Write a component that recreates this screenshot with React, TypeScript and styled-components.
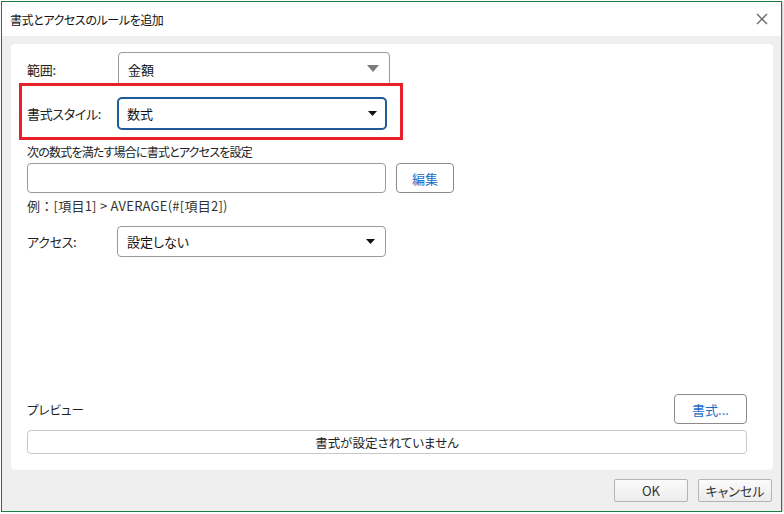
import React from "react";
import styled, { createGlobalStyle } from "styled-components";

const GlobalStyle = createGlobalStyle`
  html, body { margin: 0; padding: 0; background: #ffffff; }
  body {
    font-family: "Noto Sans CJK JP", "Noto Sans", sans-serif;
    font-feature-settings: "palt" 1;
    color: #222;
  }
  * { box-sizing: border-box; }
`;

const Dialog = styled.div`
  margin: 1px 0 0 1px;
  width: 781px;
  height: 511px;
  border: 1px solid #1d7a47;
  box-shadow: 1px 1px 2px rgba(0, 0, 0, 0.25);
  display: flex;
  flex-direction: column;
  background: #efefef;
`;

const TitleBar = styled.div`
  height: 34px;
  background: #fff;
  display: flex;
  align-items: center;
  justify-content: space-between;
  padding: 0 12px 0 8px;
  font-size: 12px;
  letter-spacing: -0.4px;
  color: #111;
`;

const CloseButton = styled.button`
  border: none;
  background: none;
  padding: 0;
  width: 14px;
  height: 14px;
  display: flex;
  align-items: center;
  justify-content: center;
  cursor: pointer;
`;

const Body = styled.div`
  flex: 1;
  display: flex;
  flex-direction: column;
  padding: 8px 8px 9px 9px;
`;

const Panel = styled.div`
  position: relative;
  flex: 1;
  background: #fff;
  border-radius: 4px;
  padding: 8px 26px 16px 16px;
  display: flex;
  flex-direction: column;
`;

const Row = styled.div<{ $mt?: number }>`
  display: flex;
  align-items: center;
  margin-top: ${(p) => p.$mt ?? 0}px;
`;

const Label = styled.div<{ $w: number }>`
  width: ${(p) => p.$w}px;
  font-size: 13px;
  letter-spacing: -0.3px;
  color: #222;
`;

const Select = styled.div<{ $w: number; $h: number; $focused?: boolean }>`
  width: ${(p) => p.$w}px;
  height: ${(p) => p.$h}px;
  border: ${(p) => (p.$focused ? "2px solid #1f5a99" : "1px solid #9a9a9a")};
  border-radius: ${(p) => (p.$focused ? 5 : 4)}px;
  display: flex;
  align-items: center;
  justify-content: space-between;
  padding: ${(p) => (p.$focused ? "0 8px 0 8px" : "0 10px 0 9px")};
  font-size: 13px;
  color: #111;
  background: #fff;
`;

const Highlight = styled.div`
  position: absolute;
  left: 8px;
  top: 39px;
  width: 384px;
  height: 57px;
  border: 3px solid #e8202a;
  pointer-events: none;
`;

const Caption = styled.div<{ $mt: number }>`
  margin-top: ${(p) => p.$mt}px;
  font-size: 12px;
  letter-spacing: -0.8px;
  line-height: 16px;
  color: #222;
`;

const Example = styled.div`
  margin-top: 5px;
  font-size: 13px;
  letter-spacing: 0.25px;
  line-height: 16px;
  font-feature-settings: normal;
  color: #333;
`;

const TextInput = styled.div`
  width: 359px;
  height: 30px;
  border: 1px solid #9a9a9a;
  border-radius: 4px;
  background: #fff;
`;

const PanelButton = styled.button<{ $w: number }>`
  width: ${(p) => p.$w}px;
  height: 30px;
  margin-left: ${(p) => (p.$w < 60 ? 10 : 0)}px;
  border: 1px solid #8a8a8a;
  border-radius: 4px;
  background: #fff;
  color: #1a6cc6;
  font-family: inherit;
  font-feature-settings: "palt" 1;
  font-size: 13px;
  padding: 0;
`;

const Spacer = styled.div`
  flex: 1;
`;

const PreviewHeader = styled.div`
  display: flex;
  align-items: center;
  justify-content: space-between;
  font-size: 12.5px;
`;

const PreviewBox = styled.div`
  margin-top: 6px;
  height: 24px;
  border: 1px solid #c8c8c8;
  border-radius: 4px;
  display: flex;
  align-items: center;
  justify-content: center;
  font-size: 12.5px;
  color: #222;
`;

const Footer = styled.div`
  display: flex;
  justify-content: flex-end;
  gap: 10px;
  margin-top: 9px;
  padding-right: 1px;
`;

const FooterButton = styled.button`
  width: 74px;
  height: 23px;
  border: 1px solid #b4b4b4;
  border-radius: 2px;
  background: linear-gradient(#fbfbfb, #ececec);
  font-family: inherit;
  font-feature-settings: "palt" 1;
  font-size: 13px;
  color: #333;
  padding: 0;
`;

const Caret = ({ big }: { big?: boolean }) =>
  big ? (
    <svg width="12" height="8" viewBox="0 0 12 8">
      <path d="M0 0 H12 L6 7 Z" fill="#7a7a7a" />
    </svg>
  ) : (
    <svg width="9" height="6" viewBox="0 0 9 6">
      <path d="M0 0 H9 L4.5 5 Z" fill="#111" />
    </svg>
  );

export default function App() {
  return (
    <>
      <GlobalStyle />
      <Dialog>
        <TitleBar>
          <span>書式とアクセスのルールを追加</span>
          <CloseButton aria-label="close">
            <svg width="12" height="12" viewBox="0 0 12 12">
              <path d="M1 1 L11 11 M11 1 L1 11" stroke="#6a6a6a" strokeWidth="1.4" />
            </svg>
          </CloseButton>
        </TitleBar>
        <Body>
          <Panel>
            <Row>
              <Label $w={91}>範囲:</Label>
              <Select $w={272} $h={34}>
                <span>金額</span>
                <Caret big />
              </Select>
            </Row>
            <Row $mt={11}>
              <Label $w={90}>書式スタイル:</Label>
              <Select $w={270} $h={33} $focused>
                <span>数式</span>
                <Caret />
              </Select>
            </Row>
            <Highlight />
            <Caption $mt={14}>次の数式を満たす場合に書式とアクセスを設定</Caption>
            <Row $mt={3}>
              <TextInput />
              <PanelButton $w={58}>編集</PanelButton>
            </Row>
            <Example>例：[項目1] &gt; AVERAGE(#[項目2])</Example>
            <Row $mt={12}>
              <Label $w={90}>アクセス:</Label>
              <Select $w={269} $h={31}>
                <span>設定しない</span>
                <Caret />
              </Select>
            </Row>
            <Spacer />
            <PreviewHeader>
              <span>プレビュー</span>
              <PanelButton $w={73}>書式...</PanelButton>
            </PreviewHeader>
            <PreviewBox>書式が設定されていません</PreviewBox>
          </Panel>
          <Footer>
            <FooterButton>OK</FooterButton>
            <FooterButton>キャンセル</FooterButton>
          </Footer>
        </Body>
      </Dialog>
    </>
  );
}
